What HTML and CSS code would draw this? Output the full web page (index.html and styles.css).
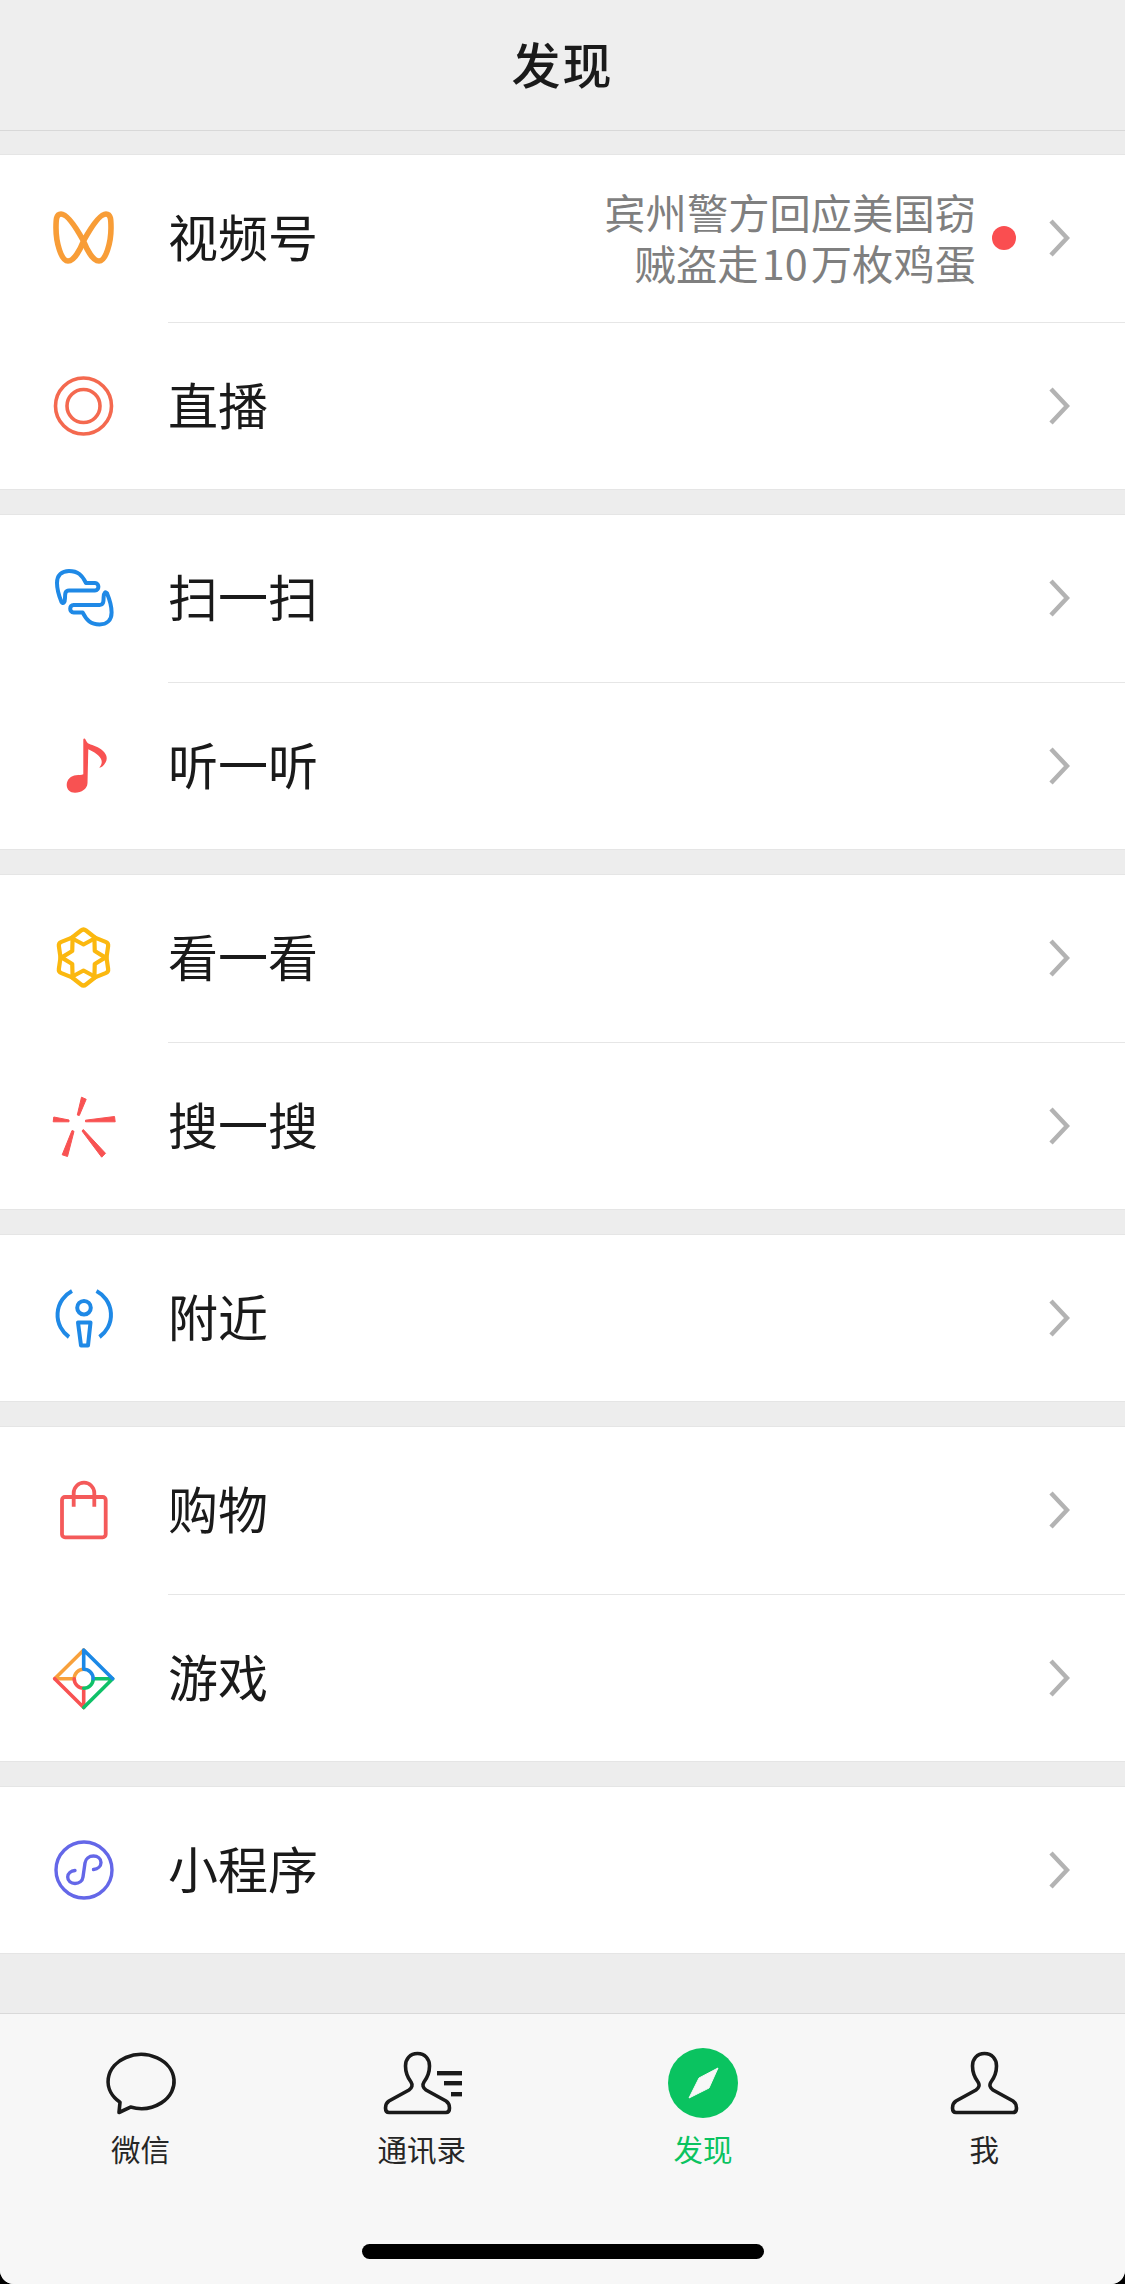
FILE: index.html
```html
<!DOCTYPE html>
<html lang="zh-CN">

<head>
  <meta charset="UTF-8">
  <title>发现</title>
  <link rel="stylesheet" href="styles.css">
</head>
<body>
  <svg class="defs" width="0" height="0" aria-hidden="true">
    <symbol id="chevron" viewBox="0 0 22 40">
      <path d="M3 3 L19 20 L3 37" fill="none" stroke="#b3b3b3" stroke-width="4.5"/>
    </symbol>
    <symbol id="person" viewBox="0 0 81 70">
      <path d="M40.5 5.5 C33 5.5 28.5 11 28.5 18 C28.5 25 31 30 34 34 C36 37 35 40 32 42 L12 53 C9 55 8.5 57 8.5 60 C8.5 63 9.5 64.5 12 64.5 L69 64.5 C71.5 64.5 72.5 63 72.5 60 C72.5 57 72 55 69 53 L49 42 C46 40 45 37 47 34 C50 30 52.5 25 52.5 18 C52.5 11 48 5.5 40.5 5.5 Z" fill="none" stroke="#1a1a1a" stroke-width="3.6"/>
    </symbol>
  </svg>

  <div class="phone">
    <header class="topbar"><h1>发现</h1></header>

    <main class="list">
      <section class="group">
        <div class="row">
          <svg class="icon" viewBox="0 0 64 64">
            <path d="M31.5 35 C26 25 16 8 9 8 C4 8 4 14 4 22 C4 36 9 55 16 55 C22 55 28 44 31.5 35 C37 25 47 8 54 8 C59 8 59 14 59 22 C59 36 54 55 47 55 C41 55 35 44 31.5 35 Z" fill="none" stroke="#f89d37" stroke-width="5.6"/>
          </svg>
          <span class="label">视频号</span>
          <span class="sub">宾州警方回应美国窃<br>贼盗走 10 万枚鸡蛋</span>
          <span class="dot"></span>
          <svg class="chevron"><use href="#chevron"/></svg>
        </div>
        <div class="row">
          <svg class="icon" viewBox="0 0 64 64" fill="none" stroke="#f4694f" stroke-width="3.6">
            <circle cx="31.5" cy="32" r="28"/>
            <circle cx="31.5" cy="32" r="16.5"/>
          </svg>
          <span class="label">直播</span>
          <svg class="chevron"><use href="#chevron"/></svg>
        </div>
      </section>

      <section class="group">
        <div class="row">
          <svg class="icon" viewBox="0 0 64 64" fill="none" stroke="#1f89e6" stroke-width="4" stroke-linejoin="round">
            <path id="scan-half" d="M9.5 36 C7 30 5 24 5 17 C5 9 10 5 17 5 C26 5 30 9 34 17 L43 17 C47.5 17 47.5 24.5 43 24.5 L17 24.5 C13 24.5 13 28 13 32 C13 36.5 11 38.5 9.5 36 Z"/>
            <use href="#scan-half" transform="rotate(180 32.3 31.7)"/>
          </svg>
          <span class="label">扫一扫</span>
          <svg class="chevron"><use href="#chevron"/></svg>
        </div>
        <div class="row">
          <svg class="icon" viewBox="0 0 64 64">
            <path d="M31.3 6 C31.3 4 33 4 33.5 5.5 C34.5 8 35.5 9 37 9.8 C41 11.5 47 13 50.5 16.5 C54.5 20 56 24 53.5 28.5 C52 31.5 49.5 33.5 47.3 33.7 C49.5 31 50.5 28 49 25 C47 21 41.5 17.5 36.3 15.3 L35.5 49 C35.3 55 29.5 58.7 23 58.7 C18 58.7 14.7 55.5 14.7 51 C14.7 45.5 19 41.8 24 41.3 C27 41 29.5 41 31.3 40.3 Z" fill="#f85252"/>
          </svg>
          <span class="label">听一听</span>
          <svg class="chevron"><use href="#chevron"/></svg>
        </div>
      </section>

      <section class="group">
        <div class="row">
          <svg class="icon" viewBox="0 0 64 64">
            <g transform="translate(31.5 31.5)" fill="none" stroke="#fbb80f" stroke-width="4.2" stroke-linejoin="round">
              <path id="star-petal" d="M-2.5 -27 Q0 -29 2.5 -27 L12 -19.5 L0 -13 L-12 -19.5 Z"/>
              <use href="#star-petal" transform="rotate(60)"/>
              <use href="#star-petal" transform="rotate(120)"/>
              <use href="#star-petal" transform="rotate(180)"/>
              <use href="#star-petal" transform="rotate(240)"/>
              <use href="#star-petal" transform="rotate(300)"/>
            </g>
          </svg>
          <span class="label">看一看</span>
          <svg class="chevron"><use href="#chevron"/></svg>
        </div>
        <div class="row">
          <svg class="icon" viewBox="0 0 64 64">
            <g fill="#f85252" stroke="#f85252" stroke-width="1" stroke-linejoin="round">
              <polygon points="29.5,3.2 34.2,5.3 27.3,21.5 25.3,21"/>
              <polygon points="1.8,23 17,26 17,27.8 1.2,27.8"/>
              <polygon points="33.5,26.2 62.5,22.5 63.2,27.8 33.5,27.8"/>
              <polygon points="20,36.5 22,37.3 15.5,62.5 10.2,60.8"/>
              <polygon points="31.3,35.5 53.5,59.3 49.7,63.2 30,37"/>
            </g>
          </svg>
          <span class="label">搜一搜</span>
          <svg class="chevron"><use href="#chevron"/></svg>
        </div>
      </section>

      <section class="group">
        <div class="row">
          <svg class="icon" viewBox="0 0 64 64" fill="none" stroke="#1f89e6" stroke-width="4">
            <path d="M20 5 A27 27 0 0 0 17 51"/>
            <path d="M44.5 5 A27 27 0 0 1 47.5 51"/>
            <circle cx="32" cy="21.7" r="6.8"/>
            <path d="M26 36.5 H38.5 L36 59.5 H29 Z" stroke-linejoin="round"/>
          </svg>
          <span class="label">附近</span>
          <svg class="chevron"><use href="#chevron"/></svg>
        </div>
      </section>

      <section class="group">
        <div class="row">
          <svg class="icon" viewBox="0 0 64 64" fill="none" stroke="#f45a5a" stroke-width="3.8">
            <rect x="10" y="19" width="43.7" height="40.3" rx="3"/>
            <path d="M21.7 28.7 V15 A10.3 10.3 0 0 1 42.3 15 V28.7"/>
          </svg>
          <span class="label">购物</span>
          <svg class="chevron"><use href="#chevron"/></svg>
        </div>
        <div class="row">
          <svg class="icon" viewBox="0 0 64 64" fill="none" stroke-width="3.6" stroke-linecap="round" stroke-linejoin="round">
            <path stroke="#f8a13c" d="M2.7 32.7 H22.2 A9.5 9.5 0 0 1 31.7 23.2 M2.7 32.7 L31.7 4"/>
            <path stroke="#f85252" d="M31.7 61.5 V42.2 A9.5 9.5 0 0 1 22.2 32.7 M31.7 61.5 L2.7 32.7"/>
            <path stroke="#0fc168" d="M60.7 32.7 H41.2 A9.5 9.5 0 0 1 31.7 42.2 M60.7 32.7 L31.7 61.5"/>
            <path stroke="#1b88e6" d="M31.7 23.2 V4 L60.7 32.7 M31.7 23.2 A9.5 9.5 0 0 1 41.2 32.7"/>
          </svg>
          <span class="label">游戏</span>
          <svg class="chevron"><use href="#chevron"/></svg>
        </div>
      </section>

      <section class="group">
        <div class="row">
          <svg class="icon" viewBox="0 0 64 64" fill="none" stroke="#6467e8" stroke-width="3.4">
            <circle cx="32" cy="32" r="28"/>
            <path d="M41.5 31.5 C46 31 49 28 49 24.5 C49 20.5 45.5 18 41.5 18 C37 18 33.5 21 33 25 L31 39 C30.5 43 27 45.5 23 45.5 C19 45.5 15.7 43 15.7 39 C15.7 35.5 19 33 23 32.5" stroke-linecap="round"/>
          </svg>
          <span class="label">小程序</span>
          <svg class="chevron"><use href="#chevron"/></svg>
        </div>
      </section>
    </main>

    <footer class="tabbar">
      <nav class="tabs">
        <div class="tab">
          <svg class="tab-icon" viewBox="0 0 80 70">
            <path d="M29.5 59.1 A33 27 0 1 0 19 54.3 L18 64.5 Z" fill="none" stroke="#1a1a1a" stroke-width="3.6" stroke-linejoin="round"/>
          </svg>
          <span>微信</span>
        </div>
        <div class="tab">
          <svg class="tab-icon tab-icon-wide" viewBox="0 0 90 70">
            <use href="#person" width="81" height="70"/>
            <rect x="60" y="23" width="25" height="4.4" fill="#1a1a1a"/>
            <rect x="67" y="33" width="18" height="4.4" fill="#1a1a1a"/>
            <rect x="74" y="44" width="11" height="4.4" fill="#1a1a1a"/>
          </svg>
          <span>通讯录</span>
        </div>
        <div class="tab tab-active">
          <svg class="tab-icon" viewBox="0 0 80 70">
            <circle cx="40" cy="35" r="35" fill="#0ac360"/>
            <path d="M55 20 L46 40 L26 50 L36 30 Z" fill="#f7f7f7" stroke="#f7f7f7" stroke-width="1" stroke-linejoin="round"/>
          </svg>
          <span>发现</span>
        </div>
        <div class="tab">
          <svg class="tab-icon" viewBox="0 0 80 70"><use href="#person" width="81" height="70"/></svg>
          <span>我</span>
        </div>
      </nav>
      <div class="home-bar"></div>
    </footer>
  </div>
</body>
</html>
```

FILE: styles.css
```css
html { background: #000; }
body {
  margin: 0;
  font-family: "Noto Sans CJK SC", "Noto Sans", sans-serif;
  color: #1a1a1a;
}
.defs { position: absolute; }
.phone {
  display: flex;
  flex-direction: column;
  height: 2284px;
  overflow: hidden;
  background: #ededed;
  border-radius: 0 0 14px 14px;
}

.topbar {
  height: 130px;
  display: flex;
  align-items: center;
  justify-content: center;
  border-bottom: 1px solid #d8d8d8;
  background: #eeeeee;
}
.topbar h1 {
  margin: 0 0 6px;
  font-size: 49px;
  font-weight: 500;
  line-height: 1;
  letter-spacing: 2px;
}

.list { flex: 1; padding-top: 24px; }
.group {
  margin-bottom: 26px;
  background: #fff;
  box-shadow: 0 0 0 1px #e5e5e5;
}
.row {
  position: relative;
  display: flex;
  align-items: center;
  height: 166px;
  padding: 0 55px 0 52px;
}
.row + .row { margin-top: 2px; }
.row + .row::before {
  content: "";
  position: absolute;
  top: -1px;
  left: 168px;
  right: 0;
  height: 1px;
  background: #e6e6e6;
}
.icon { width: 64px; height: 64px; flex: none; overflow: visible; }
.label {
  margin: 0 auto 6px 52px;
  font-size: 50px;
  line-height: 1;
}
.sub {
  margin-bottom: 3px;
  font-size: 41.3px;
  line-height: 51px;
  text-align: right;
  color: #7f7f7f;
  word-spacing: -6px;
}
.dot {
  width: 24px;
  height: 24px;
  margin: 0 32px 0 16px;
  border-radius: 50%;
  background: #fa4e50;
}
.chevron { width: 22px; height: 40px; flex: none; }

.tabbar {
  height: 270px;
  display: flex;
  flex-direction: column;
  align-items: center;
  border-top: 1px solid #d9d9d9;
  background: #f7f7f7;
}
.tabs {
  display: grid;
  grid-template-columns: repeat(4, 1fr);
  width: 100%;
  padding-top: 34px;
}
.tab {
  display: flex;
  flex-direction: column;
  align-items: center;
  font-size: 29.5px;
  line-height: 36px;
  color: #262626;
}
.tab-icon { width: 80px; height: 70px; margin-bottom: 12px; }
.tab-icon-wide { width: 90px; }
.tab-active { color: #0ac360; }
.home-bar {
  width: 402px;
  height: 15px;
  margin-top: 78px;
  border-radius: 8px;
  background: #000;
}
```
